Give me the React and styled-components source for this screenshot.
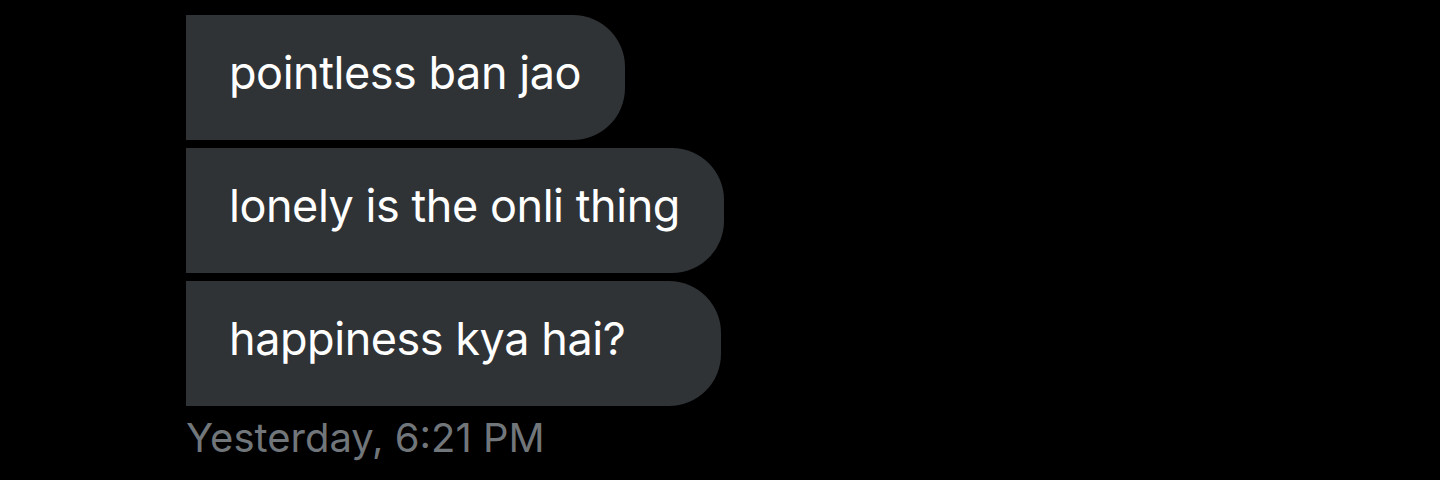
import React from "react";
import styled, { createGlobalStyle } from "styled-components";

const Global = createGlobalStyle`
  html, body { margin: 0; padding: 0; background: #000; }
  body { font-family: Inter, "Noto Sans", sans-serif; }
`;

const Page = styled.div`
  width: 1440px;
  height: 480px;
  background: #000;
  box-sizing: border-box;
  padding: 15px 0 0 186px;
  display: flex;
  flex-direction: column;
  align-items: flex-start;
  overflow: hidden;
`;

const Group = styled.div`
  display: flex;
  flex-direction: column;
  align-items: flex-start;
  gap: 8px;
`;

const Bubble = styled.div`
  height: 125px;
  min-width: ${(p) => p.$minWidth || 0}px;
  box-sizing: border-box;
  display: flex;
  align-items: center;
  padding: 0 44px 10px 43px;
  background: #2f3336;
  color: #ffffff;
  font-size: 45px;
  letter-spacing: -0.45px;
  border-radius: 0 52px 52px 0;
  white-space: nowrap;
`;

const Stamp = styled.div`
  margin-top: 8px;
  color: #71767b;
  font-size: 40px;
  line-height: 48px;
  white-space: nowrap;
`;

export default function App() {
  const msgs = [
    { text: "pointless ban jao" },
    { text: "lonely is the onli thing" },
    { text: "happiness kya hai?", minWidth: 535 },
  ];
  return (
    <>
      <Global />
      <Page>
        <Group>
          {msgs.map((m) => (
            <Bubble key={m.text} $minWidth={m.minWidth}>
              {m.text}
            </Bubble>
          ))}
        </Group>
        <Stamp>Yesterday, 6:21 PM</Stamp>
      </Page>
    </>
  );
}
